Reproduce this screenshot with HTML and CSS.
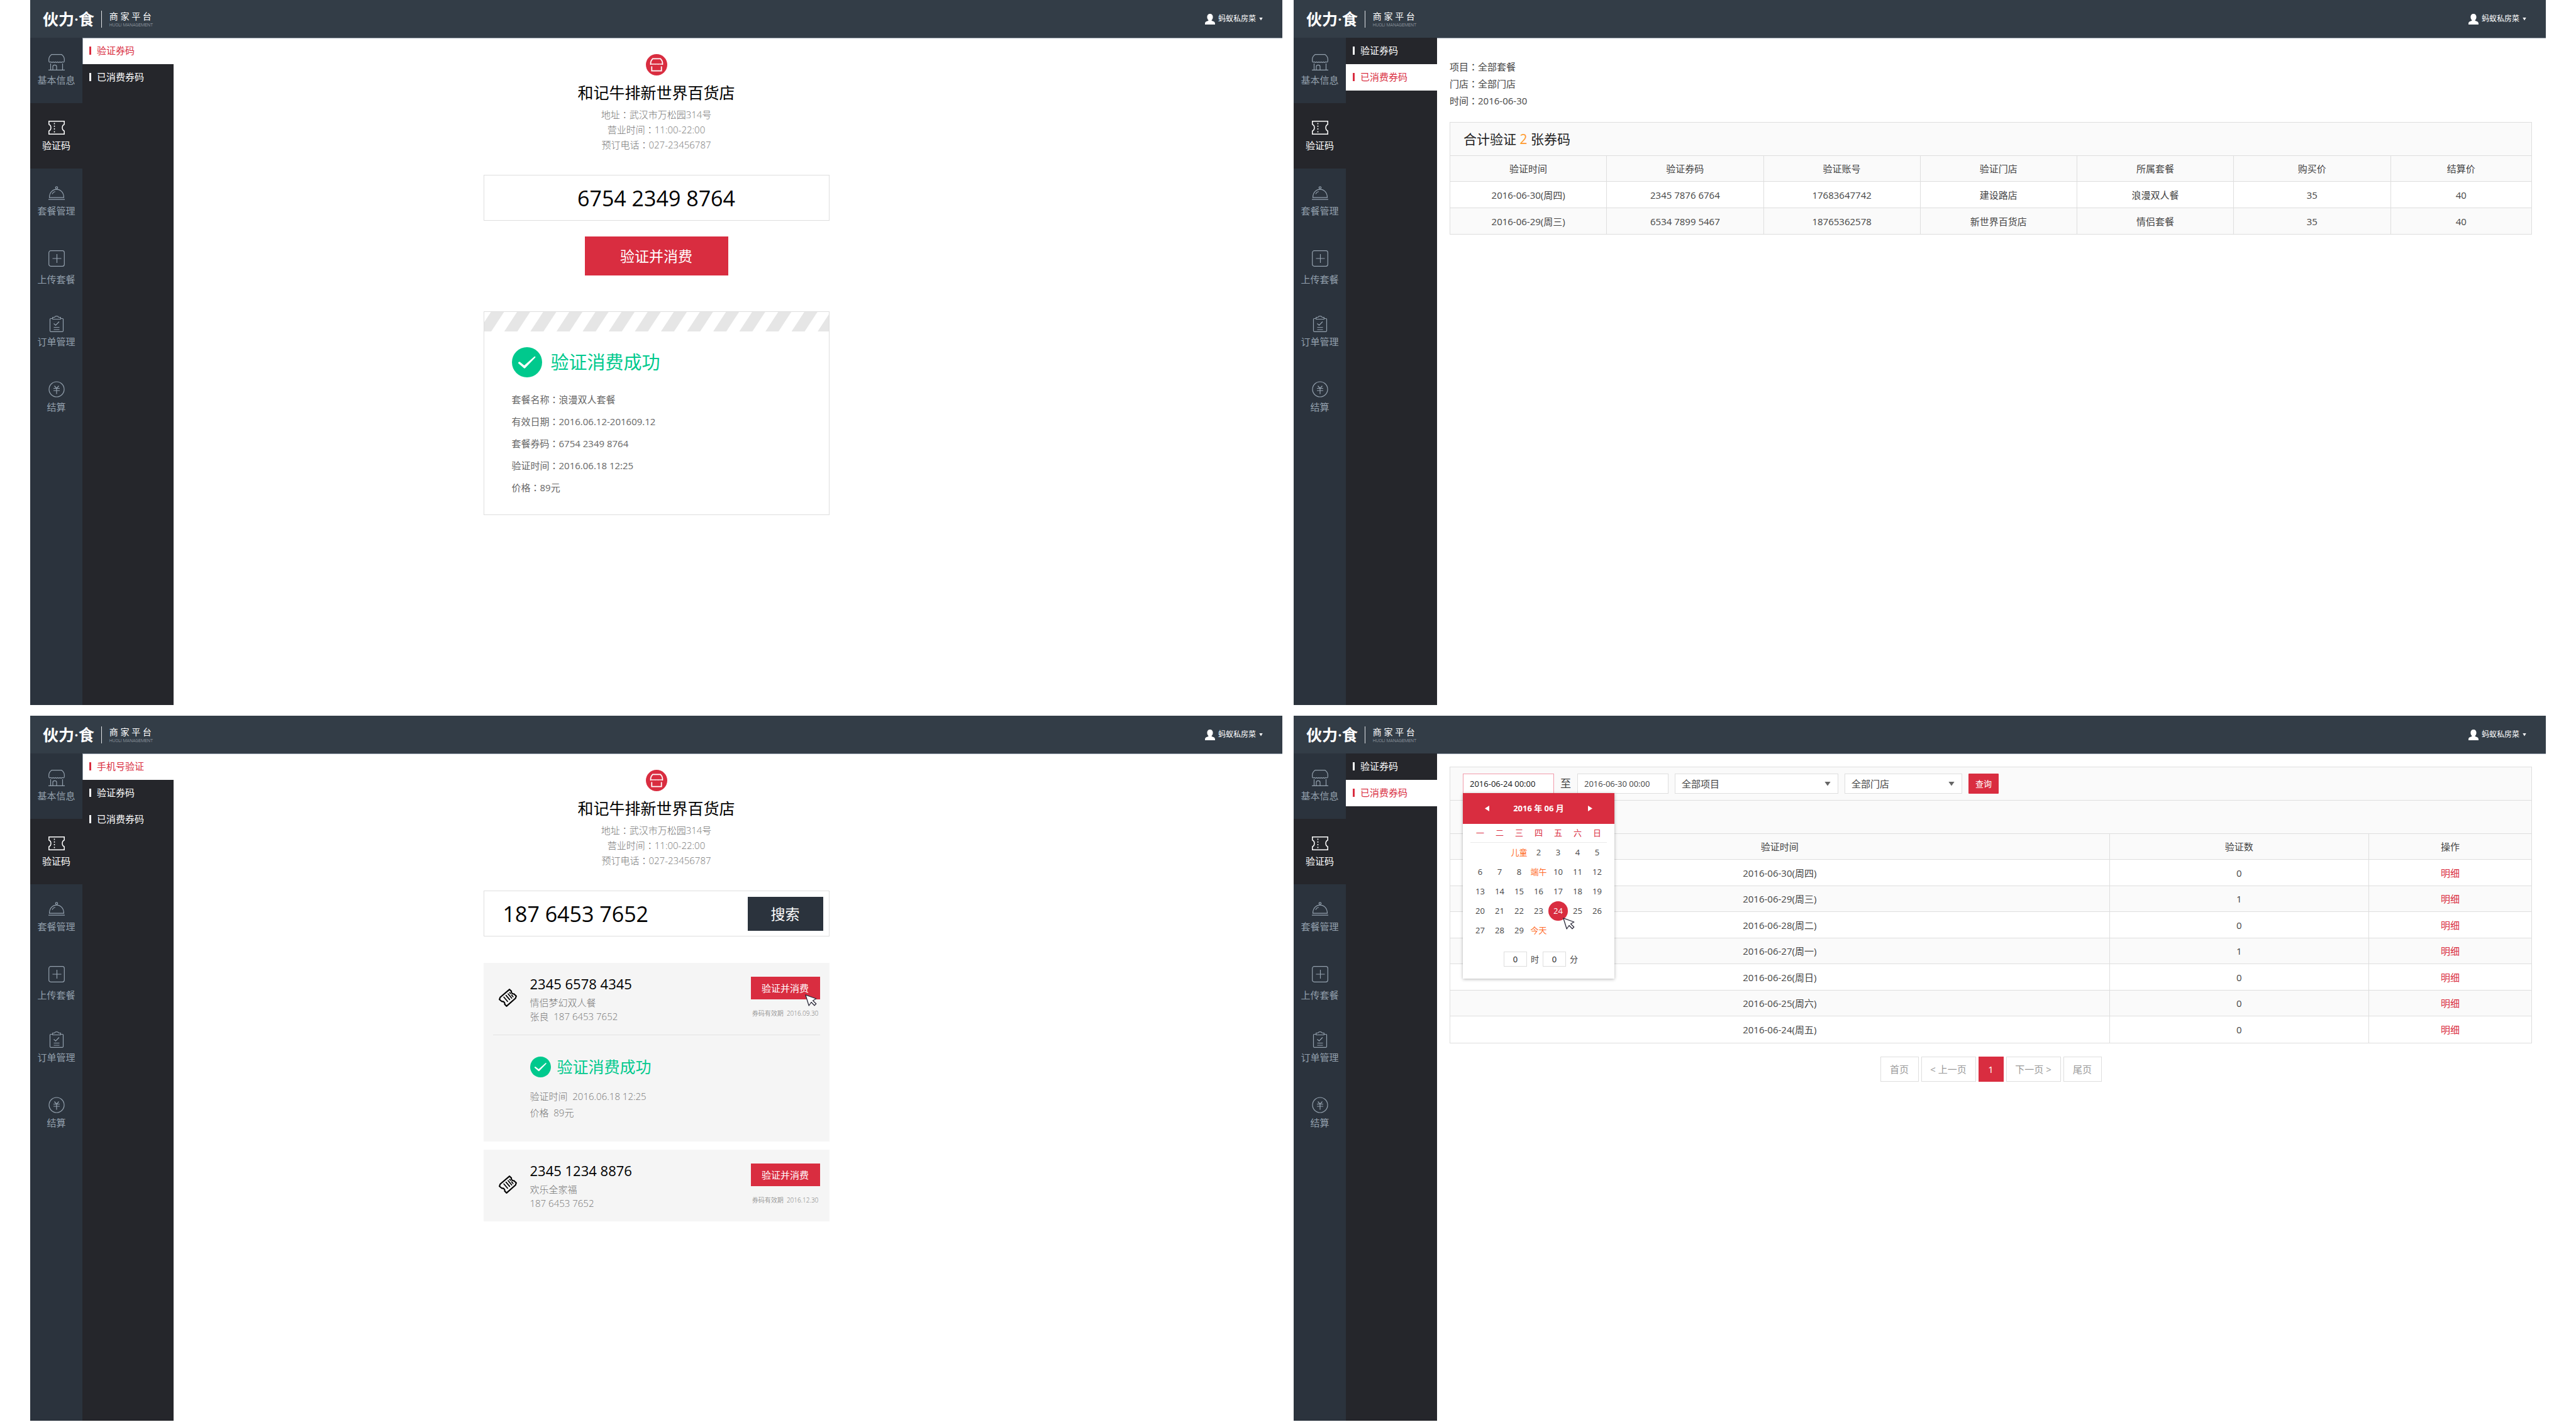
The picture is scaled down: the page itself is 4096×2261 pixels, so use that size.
FILE: index.html
```html
<!DOCTYPE html>
<html lang="zh-CN">
<head>
<meta charset="utf-8">
<title>伙力·食 商家平台</title>
<link rel="stylesheet" href="styles.css">
</head>
<body>
<svg class="sprite" aria-hidden="true">
  <symbol id="i-shop" viewBox="0 0 26 26"><path d="M5 .7h16c2.600 2 4.300 4.600 4.300 7.300v3c0 1.200-.7 1.800-1.600 1.800-.9 0-1.300-.5-1.800-.5s-.9 1-1.800 1-1.300-1-1.800-1-.9 1-1.800 1-1.300-1-1.800-1-.9 1-1.800 1-1.300-1-1.800-1-.9 1-1.800 1-1.300-1-1.800-1-.9 1-1.800 1-1.300-1-1.800-1-.6.5-1.500.5C1.300 12.800.7 12.200.7 11V8c0-2.700 1.700-5.300 4.300-7.300zM3.500 15v10M22.500 15v10M0 25.300h26M7 25v-5c0-3.500 6-3.500 6 0v5"/></symbol>
  <symbol id="i-ticket" viewBox="0 0 26 22"><path stroke-width="1.500" d="M.8.8h24.400v5c-4.200 1.800-4.200 8.600 0 10.400v5H.8v-5c4.200-1.800 4.200-8.600 0-10.400z"/><path d="M9.500 3.500v16" stroke-width="1.500" stroke-dasharray="2 2.300"/></symbol>
  <symbol id="i-dish" viewBox="0 0 26 22"><circle cx="13" cy="2.500" r="1.700"/><path d="M1.500 18.200c0-17.500 23-17.500 23 0zM0 21.200h26M6 12.500c.8-2 2.400-3.400 4.800-4"/></symbol>
  <symbol id="i-upload" viewBox="0 0 26 31"><rect x=".7" y=".7" width="24.600" height="24.600" rx="3"/><path d="M13.500 6v14M6.500 13h14"/></symbol>
  <symbol id="i-order" viewBox="0 0 26 26"><path d="M6 4.500H3.700c-.7 0-1.200.5-1.200 1.200v18.400c0 .7.500 1.200 1.200 1.200h18.600c.7 0 1.200-.5 1.200-1.200V5.700c0-.7-.5-1.200-1.200-1.200H20M6.700 5.500v-3h3c.5-1 1-1.800 3.300-1.800s2.800.8 3.300 1.800h3v3zM8.500 12.500l3 2.700 5.500-5.700M8.500 18.500h9M8.500 22h9"/></symbol>
  <symbol id="i-yen" viewBox="0 0 26 26"><circle cx="13" cy="13" r="12"/><path d="M9.500 7.500l3.500 4 3.500-4M8 11.500h10M8 15h10M13 11.500v9"/></symbol>
  <symbol id="i-user" viewBox="0 0 16 17"><path d="M8 0c3 0 4.600 2 4.600 5 0 2.200-.8 4-2 5v1c3 .8 5.400 1.800 5.400 4.600V17H0v-1.400c0-2.800 2.400-3.800 5.400-4.600v-1c-1.200-1-2-2.800-2-5C3.400 2 5 0 8 0z"/></symbol>
  <symbol id="i-badge" viewBox="0 0 34 34"><circle cx="17" cy="17" r="17" fill="#d92d40"/><path fill="none" stroke="#fff" stroke-width="1.800" d="M10.800 7.300h12.400c1.600 1.600 3 4 3.200 6.200v2.700H7.600v-2.700c.2-2.200 1.600-4.600 3.200-6.200z"/><path fill="none" stroke="#d92d40" stroke-dasharray="1.200 1.200" d="M9 16.800h16"/><path fill="none" stroke="#fff" stroke-width="1.800" d="M9.300 19.500v7.100h15.400v-7.100"/></symbol>
  <symbol id="i-ok" viewBox="0 0 48 48"><circle cx="24" cy="24" r="24" fill="#00c98d"/><path fill="#fff" d="M10 25.500c-.4-1 1.300-2.600 2.600-2l7 5.500 16-14c1.300-.9 2.400.2 1.500 1.600L21.300 33c-.8.800-1.800.9-2.600 0z"/></symbol>
  <symbol id="i-coupon" viewBox="0 0 30 30"><g fill="none" stroke="#000" stroke-width="2.200" stroke-linejoin="round" stroke-linecap="round"><path d="M17.800 1.200l3 3c-.5 2.600 1.700 4.900 4.400 4.500l3.600 3.500-1.200 3.600L12.800 28.800l-3-3.200c.6-2.700-1.700-5-4.400-4.400l-4.200-3.400 1.200-3.600z"/><path d="M8.500 14l6 7M12 11l6 7M18 6.500l1.300 1.500M21.300 10.500l2.200 2.700M15.500 8.500l5.800 7" stroke-width="1.800"/></g></symbol>
  <symbol id="i-cursor" viewBox="0 0 19 19"><path fill="#fff" stroke="#2d2c3c" stroke-width="1.300" stroke-linejoin="round" d="M.8.800l17 6.200-5.300 3 5.200 5-2.700 2.700-5-5.200-3.800 5.500z"/></symbol>
</svg>

<main class="board">

  <!-- 验证券码 -->
  <section class="panel">
    <header class="topbar">
      <span class="brand">伙力·食</span>
      <div class="platform"><span class="platform-name">商 家 平 台</span><span class="platform-sub">HUOLI MANAGEMENT</span></div>
      <button class="user" type="button"><svg class="user-icon"><use href="#i-user"/></svg>蚂蚁私房菜<span class="user-caret"></span></button>
    </header>
    <div class="body">
      <nav class="sidebar">
        <a class="side-item" href="#"><svg class="icon"><use href="#i-shop"/></svg>基本信息</a>
        <a class="side-item active" href="#"><svg class="icon"><use href="#i-ticket"/></svg>验证码</a>
        <a class="side-item" href="#"><svg class="icon"><use href="#i-dish"/></svg>套餐管理</a>
        <a class="side-item" href="#"><svg class="icon icon-tall"><use href="#i-upload"/></svg>上传套餐</a>
        <a class="side-item" href="#"><svg class="icon"><use href="#i-order"/></svg>订单管理</a>
        <a class="side-item" href="#"><svg class="icon"><use href="#i-yen"/></svg>结算</a>
      </nav>
      <nav class="submenu">
        <a class="sub-item current" href="#">验证券码</a>
        <a class="sub-item" href="#">已消费券码</a>
      </nav>
      <div class="content content-center">
        <svg class="badge"><use href="#i-badge"/></svg>
        <h1 class="store-name">和记牛排新世界百货店</h1>
        <p class="store-info">地址<span class="colon" lang="zh-TW">：</span>武汉市万松园314号<br>营业时间<span class="colon" lang="zh-TW">：</span>11:00-22:00<br>预订电话<span class="colon" lang="zh-TW">：</span>027-23456787</p>
        <div class="code-box"><input class="code-input centered" type="text" value="6754 2349 8764" aria-label="券码"></div>
        <button class="btn-primary" type="button">验证并消费</button>
        <div class="receipt">
          <svg class="stripes" viewBox="0 0 578 33" preserveAspectRatio="none">
            <defs><pattern id="stripe" width="43.800" height="33" patternUnits="userSpaceOnUse" patternTransform="translate(55 0) skewX(-33)"><rect width="22" height="33" fill="#e6e6e6"/></pattern></defs>
            <rect width="578" height="33" fill="url(#stripe)"/>
          </svg>
          <div class="receipt-body">
            <h2 class="success"><svg class="ok"><use href="#i-ok"/></svg>验证消费成功</h2>
            <ul class="receipt-rows">
              <li>套餐名称<span class="colon" lang="zh-TW">：</span>浪漫双人套餐</li>
              <li>有效日期<span class="colon" lang="zh-TW">：</span>2016.06.12-201609.12</li>
              <li>套餐券码<span class="colon" lang="zh-TW">：</span>6754 2349 8764</li>
              <li>验证时间<span class="colon" lang="zh-TW">：</span>2016.06.18 12:25</li>
              <li>价格<span class="colon" lang="zh-TW">：</span>89元</li>
            </ul>
          </div>
        </div>
      </div>
    </div>
  </section>

  <!-- 已消费券码：明细 -->
  <section class="panel">
    <header class="topbar">
      <span class="brand">伙力·食</span>
      <div class="platform"><span class="platform-name">商 家 平 台</span><span class="platform-sub">HUOLI MANAGEMENT</span></div>
      <button class="user" type="button"><svg class="user-icon"><use href="#i-user"/></svg>蚂蚁私房菜<span class="user-caret"></span></button>
    </header>
    <div class="body">
      <nav class="sidebar">
        <a class="side-item" href="#"><svg class="icon"><use href="#i-shop"/></svg>基本信息</a>
        <a class="side-item active" href="#"><svg class="icon"><use href="#i-ticket"/></svg>验证码</a>
        <a class="side-item" href="#"><svg class="icon"><use href="#i-dish"/></svg>套餐管理</a>
        <a class="side-item" href="#"><svg class="icon icon-tall"><use href="#i-upload"/></svg>上传套餐</a>
        <a class="side-item" href="#"><svg class="icon"><use href="#i-order"/></svg>订单管理</a>
        <a class="side-item" href="#"><svg class="icon"><use href="#i-yen"/></svg>结算</a>
      </nav>
      <nav class="submenu">
        <a class="sub-item" href="#">验证券码</a>
        <a class="sub-item current" href="#">已消费券码</a>
      </nav>
      <div class="content content-report">
        <p class="summary">项目<span class="colon" lang="zh-TW">：</span>全部套餐<br>门店<span class="colon" lang="zh-TW">：</span>全部门店<br>时间<span class="colon" lang="zh-TW">：</span>2016-06-30</p>
        <div class="report">
          <h2 class="report-title">合计验证 <b class="count">2</b> 张券码</h2>
          <table class="grid detail">
            <thead><tr><th>验证时间</th><th>验证券码</th><th>验证账号</th><th>验证门店</th><th>所属套餐</th><th>购买价</th><th>结算价</th></tr></thead>
            <tbody>
              <tr><td>2016-06-30(周四)</td><td>2345 7876 6764</td><td>17683647742</td><td>建设路店</td><td>浪漫双人餐</td><td>35</td><td>40</td></tr>
              <tr><td>2016-06-29(周三)</td><td>6534 7899 5467</td><td>18765362578</td><td>新世界百货店</td><td>情侣套餐</td><td>35</td><td>40</td></tr>
            </tbody>
          </table>
        </div>
      </div>
    </div>
  </section>

  <!-- 手机号验证 -->
  <section class="panel">
    <header class="topbar">
      <span class="brand">伙力·食</span>
      <div class="platform"><span class="platform-name">商 家 平 台</span><span class="platform-sub">HUOLI MANAGEMENT</span></div>
      <button class="user" type="button"><svg class="user-icon"><use href="#i-user"/></svg>蚂蚁私房菜<span class="user-caret"></span></button>
    </header>
    <div class="body">
      <nav class="sidebar">
        <a class="side-item" href="#"><svg class="icon"><use href="#i-shop"/></svg>基本信息</a>
        <a class="side-item active" href="#"><svg class="icon"><use href="#i-ticket"/></svg>验证码</a>
        <a class="side-item" href="#"><svg class="icon"><use href="#i-dish"/></svg>套餐管理</a>
        <a class="side-item" href="#"><svg class="icon icon-tall"><use href="#i-upload"/></svg>上传套餐</a>
        <a class="side-item" href="#"><svg class="icon"><use href="#i-order"/></svg>订单管理</a>
        <a class="side-item" href="#"><svg class="icon"><use href="#i-yen"/></svg>结算</a>
      </nav>
      <nav class="submenu">
        <a class="sub-item current" href="#">手机号验证</a>
        <a class="sub-item" href="#">验证券码</a>
        <a class="sub-item" href="#">已消费券码</a>
      </nav>
      <div class="content content-center">
        <svg class="badge"><use href="#i-badge"/></svg>
        <h1 class="store-name">和记牛排新世界百货店</h1>
        <p class="store-info">地址<span class="colon" lang="zh-TW">：</span>武汉市万松园314号<br>营业时间<span class="colon" lang="zh-TW">：</span>11:00-22:00<br>预订电话<span class="colon" lang="zh-TW">：</span>027-23456787</p>
        <div class="code-box"><input class="code-input" type="text" value="187 6453 7652" aria-label="手机号"><button class="btn-search" type="button">搜索</button></div>
        <div class="coupons">
          <article class="coupon">
            <div class="coupon-main">
              <svg class="coupon-icon"><use href="#i-coupon"/></svg>
              <div class="coupon-text">
                <h3 class="coupon-code">2345 6578 4345</h3>
                <p class="coupon-meta">情侣梦幻双人餐<br>张良&nbsp; 187 6453 7652</p>
              </div>
              <div class="coupon-side">
                <button class="btn-use" type="button">验证并消费<svg class="cursor"><use href="#i-cursor"/></svg></button>
                <span class="expiry">券码有效期&nbsp; 2016.09.30</span>
              </div>
            </div>
            <div class="coupon-result">
              <h3 class="success success-small"><svg class="ok"><use href="#i-ok"/></svg>验证消费成功</h3>
              <p class="result-meta">验证时间&nbsp; 2016.06.18 12:25<br>价格&nbsp; 89元</p>
            </div>
          </article>
          <article class="coupon">
            <div class="coupon-main">
              <svg class="coupon-icon"><use href="#i-coupon"/></svg>
              <div class="coupon-text">
                <h3 class="coupon-code">2345 1234 8876</h3>
                <p class="coupon-meta">欢乐全家福<br>187 6453 7652</p>
              </div>
              <div class="coupon-side">
                <button class="btn-use" type="button">验证并消费</button>
                <span class="expiry">券码有效期&nbsp; 2016.12.30</span>
              </div>
            </div>
          </article>
        </div>
      </div>
    </div>
  </section>

  <!-- 已消费券码：列表 -->
  <section class="panel">
    <header class="topbar">
      <span class="brand">伙力·食</span>
      <div class="platform"><span class="platform-name">商 家 平 台</span><span class="platform-sub">HUOLI MANAGEMENT</span></div>
      <button class="user" type="button"><svg class="user-icon"><use href="#i-user"/></svg>蚂蚁私房菜<span class="user-caret"></span></button>
    </header>
    <div class="body">
      <nav class="sidebar">
        <a class="side-item" href="#"><svg class="icon"><use href="#i-shop"/></svg>基本信息</a>
        <a class="side-item active" href="#"><svg class="icon"><use href="#i-ticket"/></svg>验证码</a>
        <a class="side-item" href="#"><svg class="icon"><use href="#i-dish"/></svg>套餐管理</a>
        <a class="side-item" href="#"><svg class="icon icon-tall"><use href="#i-upload"/></svg>上传套餐</a>
        <a class="side-item" href="#"><svg class="icon"><use href="#i-order"/></svg>订单管理</a>
        <a class="side-item" href="#"><svg class="icon"><use href="#i-yen"/></svg>结算</a>
      </nav>
      <nav class="submenu">
        <a class="sub-item" href="#">验证券码</a>
        <a class="sub-item current" href="#">已消费券码</a>
      </nav>
      <div class="content content-list">
        <div class="report">
          <form class="filters">
            <div class="date-field">
              <input class="date-input focused" type="text" id="from" value="2016-06-24 00:00" aria-label="开始时间">
              <div class="calendar">
                <div class="cal-head">
                  <button class="cal-nav prev" type="button" aria-label="上个月"></button>
                  <strong>2016 年 06 月</strong>
                  <button class="cal-nav next" type="button" aria-label="下个月"></button>
                </div>
                <div class="cal-grid cal-week"><span>一</span><span>二</span><span>三</span><span>四</span><span>五</span><span>六</span><span>日</span></div>
                <div class="cal-grid cal-days">
                  <span></span><span></span><button class="day holiday" type="button">儿童</button><button class="day" type="button">2</button><button class="day" type="button">3</button><button class="day" type="button">4</button><button class="day" type="button">5</button>
                  <button class="day" type="button">6</button><button class="day" type="button">7</button><button class="day" type="button">8</button><button class="day holiday" type="button">端午</button><button class="day" type="button">10</button><button class="day" type="button">11</button><button class="day" type="button">12</button>
                  <button class="day" type="button">13</button><button class="day" type="button">14</button><button class="day" type="button">15</button><button class="day" type="button">16</button><button class="day" type="button">17</button><button class="day" type="button">18</button><button class="day" type="button">19</button>
                  <button class="day" type="button">20</button><button class="day" type="button">21</button><button class="day" type="button">22</button><button class="day" type="button">23</button><button class="day selected" type="button">24<svg class="cursor"><use href="#i-cursor"/></svg></button><button class="day" type="button">25</button><button class="day" type="button">26</button>
                  <button class="day" type="button">27</button><button class="day" type="button">28</button><button class="day" type="button">29</button><button class="day holiday" type="button">今天</button>
                </div>
                <div class="cal-time">
                  <input class="time-input" type="text" id="hour" value="0"><label for="hour">时</label>
                  <input class="time-input" type="text" id="minute" value="0"><label for="minute">分</label>
                </div>
              </div>
            </div>
            <label class="to" for="until">至</label>
            <input class="date-input" type="text" id="until" value="2016-06-30 00:00">
            <span class="select select-wide"><select aria-label="项目"><option>全部项目</option></select></span>
            <span class="select"><select aria-label="门店"><option>全部门店</option></select></span>
            <button class="btn-query" type="button">查询</button>
          </form>
          <div class="report-title"></div>
          <table class="grid daily">
            <thead><tr><th>验证时间</th><th>验证数</th><th>操作</th></tr></thead>
            <tbody>
              <tr><td>2016-06-30(周四)</td><td>0</td><td><a class="more" href="#">明细</a></td></tr>
              <tr><td>2016-06-29(周三)</td><td>1</td><td><a class="more" href="#">明细</a></td></tr>
              <tr><td>2016-06-28(周二)</td><td>0</td><td><a class="more" href="#">明细</a></td></tr>
              <tr><td>2016-06-27(周一)</td><td>1</td><td><a class="more" href="#">明细</a></td></tr>
              <tr><td>2016-06-26(周日)</td><td>0</td><td><a class="more" href="#">明细</a></td></tr>
              <tr><td>2016-06-25(周六)</td><td>0</td><td><a class="more" href="#">明细</a></td></tr>
              <tr><td>2016-06-24(周五)</td><td>0</td><td><a class="more" href="#">明细</a></td></tr>
            </tbody>
          </table>
        </div>
        <nav class="pager">
          <a class="page" href="#">首页</a>
          <a class="page page-step" href="#">&lt; 上一页</a>
          <a class="page page-now" href="#">1</a>
          <a class="page page-step" href="#">下一页 &gt;</a>
          <a class="page" href="#">尾页</a>
        </nav>
      </div>
    </div>
  </section>
</main>
</body>
</html>
```
FILE: styles.css
```css
* { box-sizing: border-box; }

body {
  margin: 0;
  background: #fff;
  color: #444;
  font: 15px/24px "Open Sans", "Noto Sans CJK SC", sans-serif;
}

h1, h2, h3, p, ul { margin: 0; padding: 0; font-weight: 400; list-style: none; }
a { text-decoration: none; color: inherit; }
button, input, select { font: inherit; color: inherit; margin: 0; padding: 0; border: 0; border-radius: 0; background: none; outline: 0; }
svg { display: block; overflow: visible; }
.sprite { position: absolute; width: 0; height: 0; }

/* colon centred in its cell */
.colon { font-family: "Noto Sans CJK TC", sans-serif; line-height: 1; }

.board {
  display: grid;
  grid-template-columns: 1fr 1fr;
  grid-template-rows: 1fr 1fr;
  gap: 17px 18px;
  min-height: 100vh;
  padding: 0 48px 2px;
}

.panel { display: flex; flex-direction: column; min-width: 0; }

/* top bar */
.topbar {
  display: flex;
  align-items: center;
  height: 60px;
  padding: 0 31px 0 20px;
  background: #333d47;
  color: #fff;
}
.brand { font-size: 25px; font-weight: 600; line-height: 30px; }
.platform {
  display: flex;
  flex-direction: column;
  justify-content: space-between;
  height: 27px;
  margin-left: 11px;
  padding-left: 12px;
  border-left: 1px solid #dfe2e5;
}
.platform-name { font-size: 14px; line-height: 18px; }
.platform-sub { font: 300 7px/8px Roboto, sans-serif; color: #a3abb3; }
.user { display: flex; align-items: center; gap: 5px; margin-left: auto; font-size: 12px; }
.user-icon { width: 16px; height: 17px; fill: #fff; }
.user-caret { width: 6px; height: 5px; background: #fff; clip-path: polygon(0 0, 100% 0, 50% 100%); }

/* navigation */
.body { display: flex; flex: 1; }
.sidebar { width: 83px; background: #2b333d; }
.side-item {
  display: flex;
  flex-direction: column;
  align-items: center;
  gap: 4px;
  height: 104px;
  padding-top: 26px;
  line-height: 22px;
  color: #93a0ad;
}
.side-item.active { background: #25262b; color: #fff; }
.icon { width: 26px; height: 26px; fill: none; stroke: currentColor; stroke-width: 1.2; }
.icon-tall { height: 31px; }

.submenu { width: 145px; background: #25262b; }
.sub-item { display: flex; align-items: center; gap: 9px; height: 42px; padding: 0 0 2px 11px; color: #fff; }
.sub-item::before { content: ""; width: 3px; height: 13px; background: currentColor; }
.sub-item.current { background: #fff; color: #d92d40; }
.sub-item.current:first-child { box-shadow: inset 1px 1px #8f9aa5; }

.content { flex: 1; min-width: 0; border-top: 1px solid #8f9aa5; }

/* verification pages: column centred on the whole panel */
.content-center { display: flex; flex-direction: column; align-items: center; padding: 25px 228px 0 0; }
.badge { width: 34px; height: 34px; }
.store-name { margin-top: 9px; font-size: 25px; line-height: 36px; color: #000; }
.store-info { margin-top: 5px; text-align: center; font-weight: 300; color: #777; }
.code-box {
  display: flex;
  align-items: center;
  width: 550px;
  height: 73px;
  margin-top: 36px;
  padding: 0 9px 0 30px;
  border: 1px solid #dedede;
}
.code-input { flex: 1; min-width: 0; font-size: 34px; line-height: 50px; color: #000; }
.code-input.centered { margin-right: 21px; text-align: center; }
.btn-search { width: 120px; height: 54px; background: #2b333d; color: #fff; font-size: 23px; }
.btn-primary { width: 228px; height: 62px; margin-top: 25px; background: #d92d40; color: #fff; font-size: 23px; }

.receipt { width: 550px; margin-top: 57px; border: 1px solid #dedede; }
.stripes { width: 100%; height: 31px; }
.receipt-body { padding: 25px 44px; }
.success { display: flex; align-items: center; gap: 14px; font-size: 29px; line-height: 48px; color: #00c98d; }
.ok { width: 48px; height: 48px; }
.receipt-rows { margin-top: 18px; line-height: 35px; color: #666; }

/* coupons */
.coupons { display: flex; flex-direction: column; gap: 13px; width: 550px; margin-top: 42px; }
.coupon { padding: 0 15px; background: #f5f5f5; }
.coupon-main { display: flex; height: 114px; padding: 19px 0 0 9px; }
.coupon-icon { width: 29px; height: 29px; margin-top: 22px; }
.coupon-text { flex: 1; padding-left: 21px; }
.coupon-code { font-size: 22px; line-height: 28px; color: #000; }
.coupon-meta { margin-top: 5px; line-height: 22px; font-weight: 300; color: #777; }
.coupon-side { display: flex; flex-direction: column; align-items: center; gap: 14px; padding-top: 3px; }
.btn-use { position: relative; width: 110px; height: 36px; background: #d92d40; color: #fff; }
.expiry { font-size: 10px; line-height: 16px; font-weight: 300; color: #777; }
.cursor { position: absolute; width: 19px; height: 19px; }
.btn-use .cursor { left: 86px; top: 28px; }
.coupon-result { padding: 34px 0 33px 59px; border-top: 1px solid #e3e3e3; }
.success-small { gap: 10px; font-size: 25px; line-height: 33px; }
.success-small .ok { width: 33px; height: 33px; }
.result-meta { margin-top: 17px; line-height: 26px; font-weight: 300; color: #777; }

/* reports */
.content-report { padding: 32px 22px 0 20px; }
.content-list { padding: 20px 22px 0 20px; }
.summary { line-height: 27px; }
.summary + .report { margin-top: 20px; }
.report { border: 1px solid #dedede; }
.report-title { height: 53px; padding-left: 21px; border-bottom: 1px solid #dedede; background: #fafafa; font-size: 21px; line-height: 52px; color: #222; }
.count { font-weight: 400; color: #ff9a2e; }

.grid { width: 100%; border-spacing: 0; table-layout: fixed; text-align: center; }
.grid th, .grid td { padding: 0; border-right: 1px solid #dedede; border-bottom: 1px solid #dedede; font-weight: 400; }
.grid th:last-child, .grid td:last-child { border-right: 0; }
.grid tbody tr:last-child td { border-bottom: 0; }
.grid thead tr { height: 41px; background: #fafafa; }
.grid tbody tr { height: 42px; }
.grid tbody tr:nth-child(even) { height: 41px; background: #fafafa; }
.detail th { width: 14.5%; }
.detail th:last-child { width: auto; }
.daily th:first-child { width: 61%; }
.daily th:last-child { width: 15%; }
.more { color: #d92d40; }

/* filters */
.filters { display: flex; gap: 10px; height: 53px; padding: 10px 20px; border-bottom: 1px solid #dedede; background: #fafafa; line-height: 31px; }
.date-field { position: relative; }
.date-input { display: block; width: 145px; height: 32px; padding: 0 10px; border: 1px solid #dedede; background: #fff; font-size: 13px; }
.date-input.focused { border-color: #f19bab; color: #111; }
.to { font-size: 17px; }
.select { display: flex; align-items: center; position: relative; width: 187px; height: 32px; }
.select-wide { width: 260px; }
.select select { width: 100%; height: 100%; padding: 0 10px; border: 1px solid #dedede; background: #fff; appearance: none; }
.select::after { content: ""; position: absolute; right: 12px; width: 10px; height: 7px; background: #666; clip-path: polygon(0 0, 100% 0, 50% 100%); }
.btn-query { width: 48px; height: 32px; border-radius: 1px; background: #d92d40; color: #fff; font-size: 13px; }

/* calendar popup */
.calendar { position: absolute; z-index: 1; left: 0; top: 31px; width: 241px; padding-bottom: 19px; background: #fff; box-shadow: 0 1px 5px rgba(0, 0, 0, .3); font-size: 13px; line-height: 29px; }
.cal-head { display: flex; align-items: center; justify-content: space-between; height: 49px; padding: 0 35px; background: #d92d40; color: #fff; }
.cal-head strong { font-weight: 700; }
.cal-nav { width: 7px; height: 9px; background: #fff; }
.cal-nav.prev { clip-path: polygon(0 50%, 100% 0, 100% 100%); }
.cal-nav.next { clip-path: polygon(0 0, 100% 50%, 0 100%); }
.cal-grid { display: grid; grid-template-columns: repeat(7, 1fr); margin: 0 12px; text-align: center; }
.cal-week { border-bottom: 1px solid #eaeaea; color: #d92d40; }
.day { position: relative; height: 31px; line-height: 31px; white-space: nowrap; }
.day.holiday { color: #ff6a26; }
.day.selected { border-radius: 50%; background: #d92d40; color: #fff; }
.day .cursor { left: 23px; top: 26px; z-index: 1; }
.cal-time { display: flex; align-items: center; gap: 6px; margin-top: 18px; padding-left: 65px; line-height: 23px; }
.time-input { width: 37px; height: 24px; border: 1px solid #dedede; text-align: center; color: #111; }

/* pager */
.pager { display: flex; justify-content: center; gap: 4px; margin-top: 21px; }
.page { width: 61px; height: 40px; border: 1px solid #dedede; text-align: center; line-height: 38px; color: #999; }
.page-step { width: 87px; }
.page-now { width: 40px; border-color: #d92d40; background: #d92d40; color: #fff; }
```
